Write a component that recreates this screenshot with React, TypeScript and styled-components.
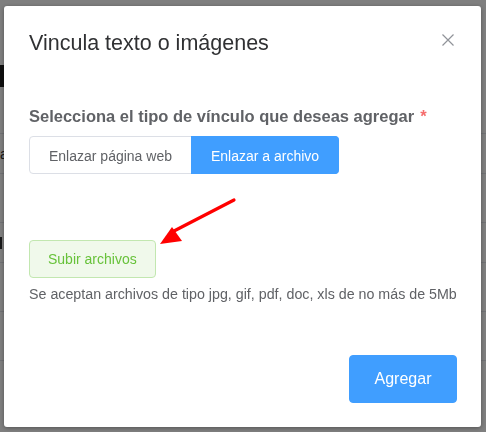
import React from "react";
import styled, { createGlobalStyle } from "styled-components";

const GlobalStyle = createGlobalStyle`
  html, body { margin: 0; padding: 0; }
  body {
    font-family: "Liberation Sans", Arial, Helvetica, sans-serif;
    background: #ffffff;
    width: 486px;
    height: 432px;
    overflow: hidden;
  }
`;

const Page = styled.div`
  width: 486px;
  height: 432px;
  padding-top: 65px;
  box-sizing: border-box;
  overflow: hidden;
`;

const PageAction = styled.div`
  width: 90px;
  height: 22px;
  background: #1f1f1f;
`;

const Table = styled.div`
  margin-top: 7px;
  display: flex;
  flex-direction: column;
`;

const Row = styled.div<{ $h: number }>`
  height: ${(p) => p.$h}px;
  border-bottom: 1px solid #e2e4ea;
  box-sizing: border-box;
  display: flex;
  align-items: center;
  font-size: 14px;
  color: #303133;
`;

const Cell = styled.span`
  padding-left: 0;
`;

const SmallBar = styled.span`
  display: inline-block;
  width: 2px;
  height: 12px;
  background: #303133;
`;

const Overlay = styled.div`
  position: fixed;
  inset: 0;
  background: rgba(0, 0, 0, 0.5);
`;

const DialogWrapper = styled.div`
  position: fixed;
  inset: 0;
`;

const Dialog = styled.div`
  position: relative;
  margin: 6px 0 0 4px;
  width: 477px;
  height: 421px;
  background: #ffffff;
  border-radius: 3px;
  box-shadow: 0 1px 4px rgba(0, 0, 0, 0.35);
  display: flex;
  flex-direction: column;
  box-sizing: border-box;
`;

const Header = styled.div`
  padding: 25px 24px 0 25px;
`;

const Title = styled.span`
  font-size: 21.5px;
  color: #303133;
`;

const CloseButton = styled.button`
  position: absolute;
  top: 27px;
  right: 27px;
  width: 13px;
  height: 13px;
  padding: 0;
  border: none;
  background: transparent;
  display: flex;
  align-items: center;
  justify-content: center;
`;

const Body = styled.div`
  padding: 51px 25px 0 25px;
  display: flex;
  flex-direction: column;
  align-items: flex-start;
`;

const Label = styled.div`
  font-size: 16.5px;
  font-weight: 700;
  color: #606266;
  margin-bottom: 10px;
`;

const Required = styled.span`
  color: #f56c6c;
  margin-left: 6px;
`;

const RadioGroup = styled.div`
  display: flex;
`;

const RadioButton = styled.button<{ $active?: boolean; $first?: boolean }>`
  height: 38px;
  padding: 1px 19px 0;
  font-family: inherit;
  font-size: 14px;
  border: 1px solid ${(p) => (p.$active ? "#409eff" : "#dcdfe6")};
  border-left-width: ${(p) => (p.$first ? "1px" : "0")};
  background: ${(p) => (p.$active ? "#409eff" : "#ffffff")};
  color: ${(p) => (p.$active ? "#ffffff" : "#606266")};
  border-radius: ${(p) => (p.$first ? "4px 0 0 4px" : "0 4px 4px 0")};
  box-shadow: ${(p) => (p.$active ? "-1px 0 0 0 #409eff" : "none")};
  cursor: pointer;
`;

const UploadButton = styled.button`
  margin-top: 66px;
  height: 38px;
  padding: 0 18px;
  font-family: inherit;
  font-size: 14px;
  background: #f0f9eb;
  border: 1px solid #c2e7b0;
  color: #67c23a;
  border-radius: 4px;
`;

const Help = styled.div`
  margin-top: 8px;
  font-size: 14.25px;
  white-space: nowrap;
  color: #606266;
`;

const Footer = styled.div`
  margin-top: auto;
  padding: 0 24px 24px 24px;
  display: flex;
  justify-content: flex-end;
`;

const PrimaryButton = styled.button`
  width: 108px;
  height: 48px;
  font-family: inherit;
  font-size: 16px;
  color: #ffffff;
  background: #409eff;
  border: 1px solid #409eff;
  border-radius: 4px;
`;

const Arrow = styled.svg`
  position: absolute;
  left: 146px;
  top: 184px;
  overflow: visible;
`;

export default function App() {
  return (
    <>
      <GlobalStyle />
      <Page>
        <PageAction />
        <Table>
          <Row $h={40} />
          <Row $h={40}>
            <Cell>archivo</Cell>
          </Row>
          <Row $h={49} />
          <Row $h={40}>
            <SmallBar />
          </Row>
          <Row $h={49} />
          <Row $h={49} />
        </Table>
      </Page>
      <Overlay />
      <DialogWrapper>
        <Dialog>
          <Header>
            <Title>Vincula texto o imágenes</Title>
          </Header>
          <CloseButton aria-label="Cerrar">
            <svg width="12" height="12" viewBox="0 0 12 12">
              <path d="M0.5 0.5 L11.5 11.5 M11.5 0.5 L0.5 11.5" stroke="#909399" strokeWidth="1.2" fill="none" />
            </svg>
          </CloseButton>
          <Body>
            <Label>
              Selecciona el tipo de vínculo que deseas agregar<Required>*</Required>
            </Label>
            <RadioGroup>
              <RadioButton $first>Enlazar página web</RadioButton>
              <RadioButton $active>Enlazar a archivo</RadioButton>
            </RadioGroup>
            <UploadButton>Subir archivos</UploadButton>
            <Help>Se aceptan archivos de tipo jpg, gif, pdf, doc, xls de no más de 5Mb</Help>
          </Body>
          <Footer>
            <PrimaryButton>Agregar</PrimaryButton>
          </Footer>
          <Arrow width="95" height="60" viewBox="0 0 95 60">
            <line x1="84" y1="10" x2="24" y2="41" stroke="#ff0000" strokeWidth="3.2" strokeLinecap="round" />
            <polygon points="10,54 22,37 32,51" fill="#ff0000" />
          </Arrow>
        </Dialog>
      </DialogWrapper>
    </>
  );
}
